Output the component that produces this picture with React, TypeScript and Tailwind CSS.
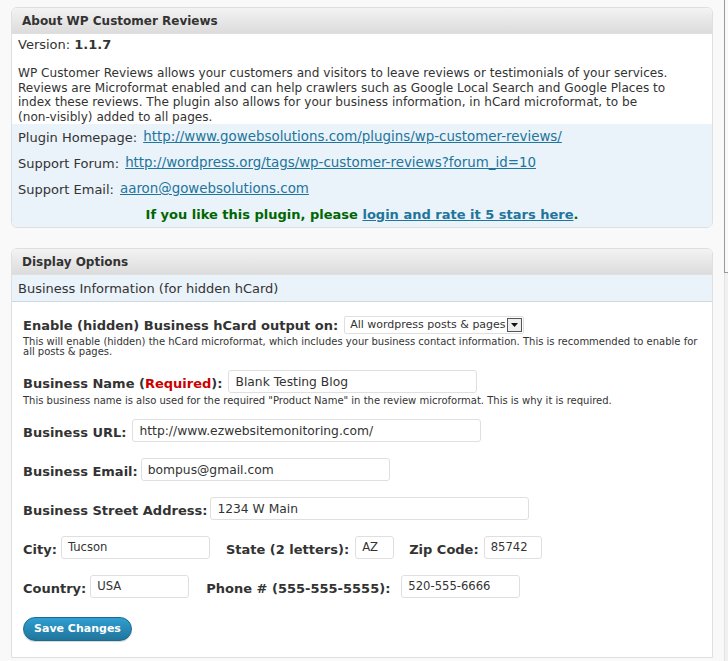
import {ReactNode} from "react";

const font = {fontFamily: '"DejaVu Sans", Verdana, sans-serif'};

function BoxHeader({children}: {children: ReactNode}) {
    return (
        <div className="h-[26px] flex items-center px-[10px] rounded-t-[6px] border-b border-[#dfdfdf] bg-gradient-to-b from-[#f3f3f3] to-[#dcdcdc] text-[12px] font-bold text-[#333]">
            {children}
        </div>
    );
}

function Field({value, className, small}: {value: string; className: string; small?: boolean}) {
    return (
        <div
            className={`h-[23px] flex items-center px-[6px] rounded-[3px] border border-[#dfdfdf] bg-white text-[#333] ${small ? 'text-[11.6px]' : 'text-[12.3px]'} ${className}`}
        >
            {value}
        </div>
    );
}

function Label({children, className = ''}: {children: ReactNode; className?: string}) {
    return <span className={`text-[13px] font-bold text-[#333] pt-[5px] leading-[18px] ${className}`}>{children}</span>;
}

export default function App() {
    return (
        <div className="w-[728px] h-[661px] overflow-hidden bg-[#f9f9f9] flex" style={font}>
            <div className="w-[724px] pl-[11px] pt-[7px] pr-[11px]">
                {/* About box */}
                <div className="w-[702px] rounded-[6px] border border-[#dfdfdf] bg-white">
                    <BoxHeader>About WP Customer Reviews</BoxHeader>
                    <div className="px-[6px] pt-[3px] text-[#333]">
                        <div className="text-[13px] leading-[15px]">Version: <b>1.1.7</b></div>
                        <div className="h-[14px]" />
                        <p className="whitespace-nowrap text-[12.1px] leading-[14.6px]">
                            WP Customer Reviews allows your customers and visitors to leave reviews or testimonials of your services.<br />
                            Reviews are Microformat enabled and can help crawlers such as Google Local Search and Google Places to<br />
                            index these reviews. The plugin also allows for your business information, in hCard microformat, to be<br />
                            (non-visibly) added to all pages.
                        </p>
                    </div>
                    <div className="bg-[#eaf2fa] rounded-b-[6px] px-[6px] text-[13px] text-[#333]">
                        <div className="h-[26px] flex items-center gap-[6px]">
                            Plugin Homepage:
                            <a className="text-[#21759b] underline text-[13.4px]">http://www.gowebsolutions.com/plugins/wp-customer-reviews/</a>
                        </div>
                        <div className="h-[26px] flex items-center gap-[6px]">
                            Support Forum:
                            <a className="text-[#21759b] underline text-[13.4px]">http://wordpress.org/tags/wp-customer-reviews?forum_id=10</a>
                        </div>
                        <div className="h-[26px] flex items-center gap-[6px]">
                            Support Email:
                            <a className="text-[#21759b] underline text-[13.4px]">aaron@gowebsolutions.com</a>
                        </div>
                        <div className="h-[25px] flex items-center justify-center font-bold text-[#006600]">
                            If you like this plugin, please&nbsp;<a className="text-[#21759b] underline">login and rate it 5 stars here</a>.
                        </div>
                    </div>
                </div>

                {/* Display options box */}
                <div className="mt-[20px] w-[702px] rounded-t-[6px] border border-[#dfdfdf] bg-white">
                    <BoxHeader>Display Options</BoxHeader>
                    <div className="h-[27px] flex items-center px-[6px] bg-[#eaf2fa] border-b border-[#cfd7df] text-[13px] text-[#333]">
                        Business Information (for hidden hCard)
                    </div>
                    <div className="px-[11px] pb-[16px]">
                        <div className="mt-[14px] h-[18px] flex items-center">
                            <span className="text-[13px] font-bold text-[#333]">Enable (hidden) Business hCard output on:</span>
                            <div className="ml-[6px] w-[180px] h-[18px] flex items-center justify-between pl-[5px] pr-[1px] border border-[#dfdfdf] rounded-[2px] text-[11px] text-[#333]">
                                All wordpress posts &amp; pages
                                <span className="w-[15px] h-[14px] border border-[#555] bg-[#eee] flex items-center justify-center">
                                    <svg width="7" height="4" viewBox="0 0 7 4"><path d="M0 0h7L3.5 4z" fill="#111"/></svg>
                                </span>
                            </div>
                        </div>
                        <p className="mt-[3px] text-[10px] leading-[9.5px] text-[#333]">
                            This will enable (hidden) the hCard microformat, which includes your business contact information. This is recommended to enable for all posts &amp; pages.
                        </p>

                        <div className="mt-[14px] flex items-start">
                            <Label>Business Name (<span className="text-[#cc0000]">Required</span>):</Label>
                            <Field value="Blank Testing Blog" className="ml-[6px] w-[249px]" />
                        </div>
                        <p className="mt-[3px] text-[10px] leading-[10px] text-[#333]">
                            This business name is also used for the required "Product Name" in the review microformat. This is why it is required.
                        </p>

                        <div className="mt-[13px] flex items-start">
                            <Label>Business URL:</Label>
                            <Field value="http://www.ezwebsitemonitoring.com/" className="ml-[6px] w-[349px]" />
                        </div>

                        <div className="mt-[16px] flex items-start">
                            <Label>Business Email:</Label>
                            <Field value="bompus@gmail.com" className="ml-[3px] w-[249px]" />
                        </div>

                        <div className="mt-[16px] flex items-start">
                            <Label>Business Street Address:</Label>
                            <Field value="1234 W Main" className="ml-[3px] w-[319px]" />
                        </div>

                        <div className="mt-[16px] flex items-start">
                            <Label>City:</Label>
                            <Field value="Tucson" small className="ml-[4px] w-[149px]" />
                            <Label className="ml-[16px]">State (2 letters):</Label>
                            <Field value="AZ" small className="ml-[6px] w-[39px]" />
                            <Label className="ml-[15px]">Zip Code:</Label>
                            <Field value="85742" small className="ml-[5px] w-[58px]" />
                        </div>

                        <div className="mt-[16px] flex items-start">
                            <Label>Country:</Label>
                            <Field value="USA" small className="ml-[4px] w-[99px]" />
                            <Label className="ml-[17px]">Phone # (555-555-5555):</Label>
                            <Field value="520-555-6666" small className="ml-[11px] w-[119px]" />
                        </div>

                        <button className="mt-[19px] h-[24px] w-[109px] rounded-full border border-[#1e6a8d] bg-gradient-to-b from-[#2e9fd2] to-[#21759b] text-[11px] font-bold text-white shadow-[0_1px_0_rgba(0,0,0,0.15)]">
                            Save Changes
                        </button>
                    </div>
                </div>
            </div>
            <div className="flex-1 flex flex-col">
                <div className="h-[273px] border-l border-b border-[#999] bg-[#f9f9f9]" />
                <div className="flex-1 border-l border-[#e3e3e3] bg-[#f1f1f1]" />
            </div>
        </div>
    );
}
